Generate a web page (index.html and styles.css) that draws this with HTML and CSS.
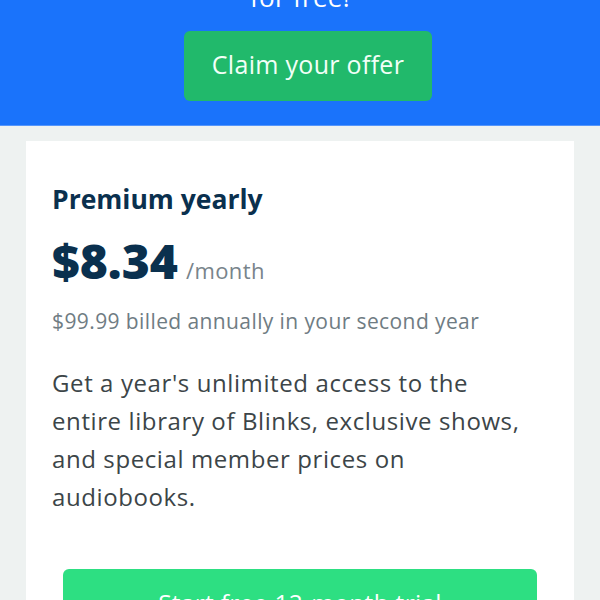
FILE: index.html
```html
<!DOCTYPE html>
<html>
<head>
<meta charset="utf-8">
<link rel="stylesheet" href="styles.css">
</head>
<body>
<header class="hero">
  <p class="hero-title">for free!</p>
  <a class="claim-btn" href="#">Claim your offer</a>
</header>
<main class="content">
  <section class="card">
    <h2 class="plan-name">Premium yearly</h2>
    <div class="price-row">
      <span class="price">$8.34</span>
      <span class="per">/month</span>
    </div>
    <p class="billing">$99.99 billed annually in your second year</p>
    <p class="desc">Get a year's unlimited access to the entire library of Blinks, exclusive shows, and special member prices on audiobooks.</p>
    <a class="trial-btn" href="#">Start free 12-month trial</a>
  </section>
</main>
</body>
</html>
```

FILE: styles.css
```css
* { box-sizing: border-box; }
html, body { margin: 0; padding: 0; }
body {
  width: 600px;
  height: 600px;
  overflow: hidden;
  background: #eef2f1;
  font-family: "Open Sans", "Lato", sans-serif;
}
.hero {
  background: #1a73fb;
  height: 126px;
  border-bottom: 1px solid #5596fb;
  display: flex;
  flex-direction: column;
  align-items: center;
}
.hero-title {
  margin: -18px 0 19px;
  height: 30px;
  line-height: 30px;
  color: #ffffff;
  font-size: 26px;
  letter-spacing: 0.3px;
}
.claim-btn {
  display: flex;
  align-items: center;
  justify-content: center;
  width: 248px;
  height: 70px;
  margin-left: 16px;
  padding-bottom: 5px;
  background: #21b96b;
  border-radius: 6px;
  color: #f2fff7;
  font-size: 25px;
  letter-spacing: 0.3px;
  text-decoration: none;
}
.content {
  padding: 15px 26px 0;
}
.card {
  background: #ffffff;
  padding: 42px 26px 0;
  height: 520px;
}
.plan-name {
  margin: 0;
  color: #0a304e;
  font-size: 26.5px;
  font-weight: 700;
  line-height: 32px;
}
.price-row {
  display: flex;
  align-items: baseline;
  gap: 8px;
  margin-top: 18px;
  height: 56px;
}
.price {
  color: #0a304e;
  font-size: 48px;
  font-weight: 800;
  line-height: 56px;
}
.per {
  color: #78848b;
  font-size: 22px;
  letter-spacing: 0.4px;
}
.billing {
  margin: 18px 0 0;
  color: #6f7c83;
  font-size: 21px;
  line-height: 28px;
  letter-spacing: 0.4px;
}
.desc {
  margin: 29px 0 0;
  max-width: 480px;
  color: #3c4548;
  font-size: 24px;
  line-height: 38px;
  letter-spacing: 0.6px;
}
.trial-btn {
  display: flex;
  justify-content: center;
  margin: 53px 11px 0;
  height: 64px;
  padding-top: 19px;
  background: #2ddf82;
  border-radius: 6px;
  color: #ffffff;
  font-size: 24.5px;
  line-height: 30px;
  letter-spacing: 0.3px;
  text-decoration: none;
}
```
